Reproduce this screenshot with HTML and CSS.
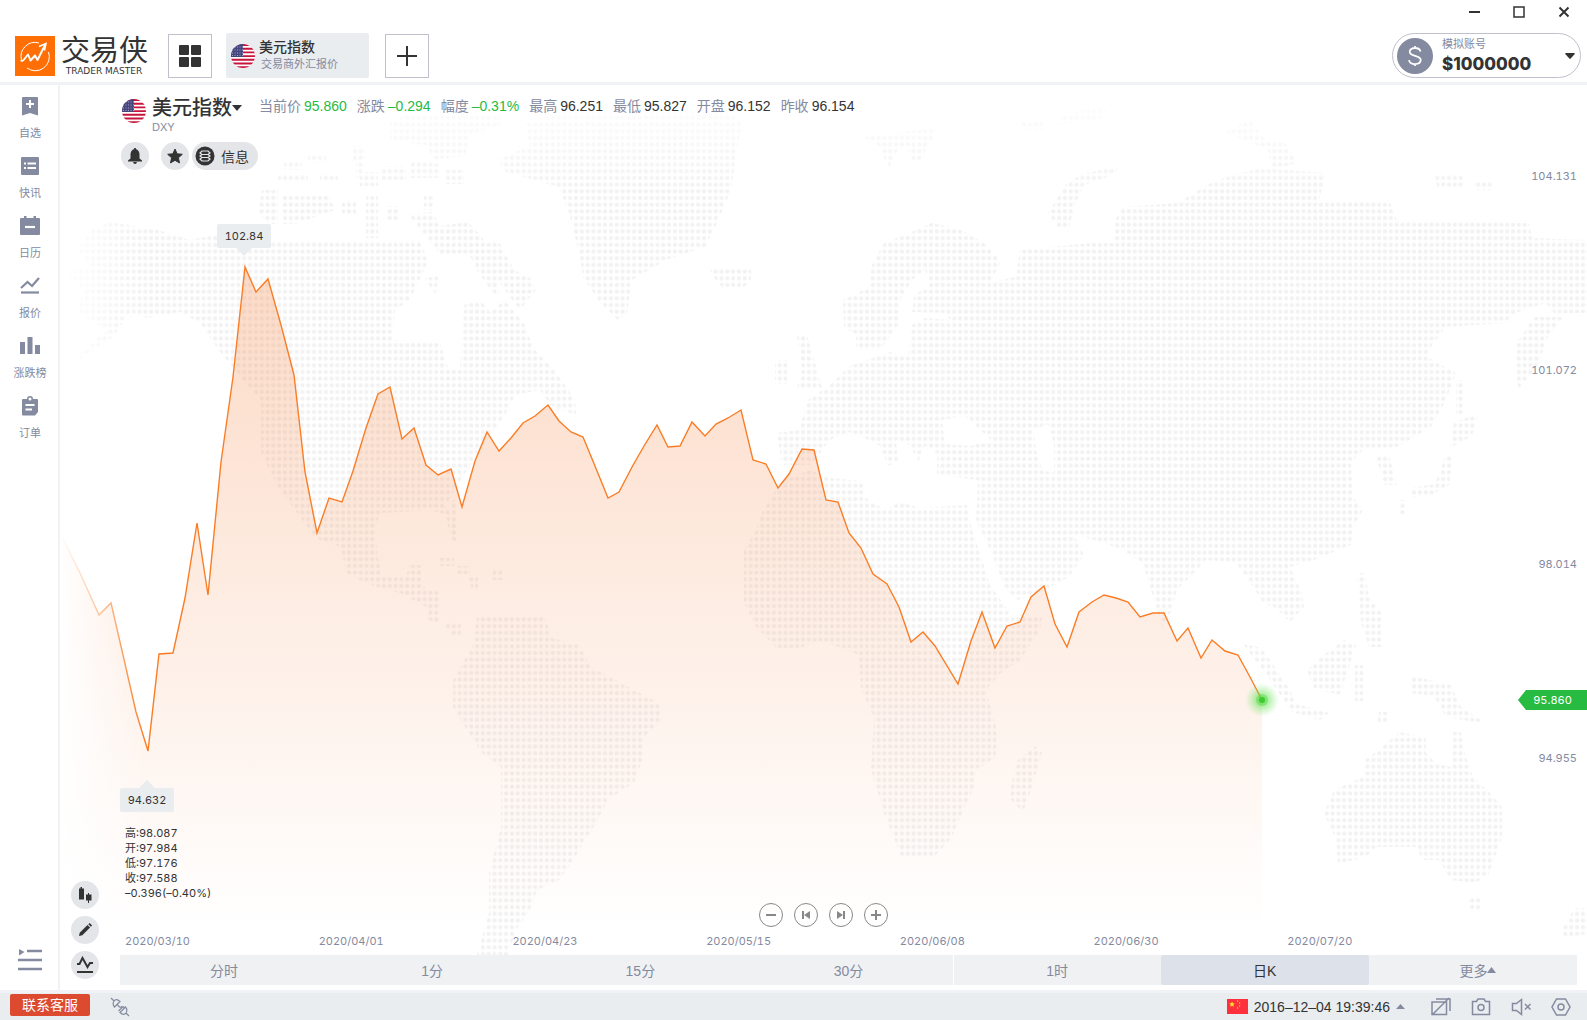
FILE: index.html
```html
<!DOCTYPE html>
<html lang="zh-CN">
<head>
  <meta charset="UTF-8">
  <meta name="viewport" content="width=device-width, initial-scale=1.0">
  <title>交易侠 - 美元指数</title>
  <link rel="stylesheet" href="styles.css">
</head>
<body>
  <!-- 公用图形 -->
  <svg class="defs" width="0" height="0" aria-hidden="true">
    <symbol id="flag-us" viewBox="0 0 24 24">
      <clipPath id="round"><circle cx="12" cy="12" r="12"/></clipPath>
      <g clip-path="url(#round)">
        <rect width="24" height="24" fill="#fff"/>
        <path d="M0 1h24M0 4.7h24M0 8.4h24M0 12.1h24M0 15.8h24M0 19.5h24M0 23.2h24" stroke="#c8143c" stroke-width="1.9"/>
        <rect width="12" height="13" fill="#46467f"/>
        <path d="M1 3h11M1 6h11M1 9h11M1 11.500h11" stroke="#a5a5c8" stroke-width="1" stroke-dasharray="1 1.500"/>
      </g>
    </symbol>
  </svg>

  <header class="header">
    <div class="window-controls">
      <button aria-label="最小化"><svg width="12" height="12" viewBox="0 0 12 12"><path d="M1 6h11" stroke="#333" stroke-width="2"/></svg></button>
      <button aria-label="最大化"><svg width="12" height="12" viewBox="0 0 12 12"><path d="M1 1h10v10H1z" fill="none" stroke="#333" stroke-width="1.500"/></svg></button>
      <button aria-label="关闭"><svg width="12" height="12" viewBox="0 0 12 12"><path d="M1.500 1.500l9 9M10.500 1.500l-9 9" stroke="#333" stroke-width="2"/></svg></button>
    </div>
    <div class="topbar">
      <a class="logo" href="#">
        <svg width="40" height="40" viewBox="0 0 40 40" fill="none" stroke="#fff">
          <rect width="40" height="40" fill="#ff6f06" stroke="none"/>
          <path d="M6.500 24A14 14 0 0 1 24 7" stroke-width="1"/>
          <path d="M33.500 16A14 14 0 0 1 12 32" stroke-width="1"/>
          <path d="M6 24q1 2 3-.5l4-5 2.500 6 4.500-5 2.500 4.500L30 9" stroke-width="1.900" stroke-linejoin="round"/>
          <path d="M24 10.500l7-3-1.500 7" stroke-width="1.500"/>
        </svg>
        <span class="logo-text">
          <span class="logo-name">交易侠</span>
          <span class="logo-sub">TRADER MASTER</span>
        </span>
      </a>
      <button class="box-btn" aria-label="全部行情">
        <svg width="24" height="24" viewBox="0 0 24 24" fill="#333"><rect x="1" y="1" width="10" height="10" rx="1"/><rect x="13" y="1" width="10" height="10" rx="1"/><rect x="1" y="13" width="10" height="10" rx="1"/><rect x="13" y="13" width="10" height="10" rx="1"/></svg>
      </button>
      <button class="page-tab">
        <svg width="24" height="24"><use href="#flag-us"/></svg>
        <span class="page-tab-text"><b>美元指数</b><small>交易商外汇报价</small></span>
      </button>
      <button class="box-btn" aria-label="新增">
        <svg width="22" height="22" viewBox="0 0 22 22"><path d="M11 1v20M1 11h20" stroke="#333" stroke-width="2"/></svg>
      </button>
      <button class="account">
        <svg width="36" height="36" viewBox="0 0 36 36"><circle cx="18" cy="18" r="18" fill="#848a9f"/><path d="M23.500 13.500c-.5-2.500-2.500-3.500-5.500-3.500s-5.300 1.300-5.300 3.800c0 5.400 11 2.700 11 8.300 0 2.600-2.500 4-5.700 4-3.300 0-5.500-1.300-6-4M18 8v2M18 26v2" fill="none" stroke="#fff" stroke-width="1.800"/></svg>
        <span class="account-text"><small>模拟账号</small><b>$1000000</b></span>
        <svg width="10" height="6" viewBox="0 0 10 6"><path d="M1 0h8q1.500 0 .5 1.200L5.700 5.500q-.7.700-1.400 0L.5 1.200Q-.5 0 1 0z" fill="#333"/></svg>
      </button>
    </div>
  </header>

  <div class="body">
    <nav class="sidebar">
      <a href="#"><svg viewBox="0 0 20 20"><path d="M3 1h14q1 0 1 1v17.500L10 17l-8 2.500V2q0-1 1-1z" fill="#848a9f"/><path d="M10 4v8M6 8h8" stroke="#fff" stroke-width="2"/></svg>自选</a>
      <a href="#"><svg viewBox="0 0 20 20"><rect x="1" y="1" width="18" height="18" rx="1" fill="#848a9f"/><path d="M4 7.500h2M7.500 7.500H16M4 12h2M7.500 12H16" stroke="#fff" stroke-width="2"/></svg>快讯</a>
      <a href="#"><svg viewBox="0 0 20 20"><path d="M4 0h2.500v2h7V0H16v2h3q1 0 1 1v15q0 1-1 1H1q-1 0-1-1V3q0-1 1-1h3z" fill="#848a9f"/><path d="M5 11h10" stroke="#fff" stroke-width="2.200"/></svg>日历</a>
      <a href="#"><svg viewBox="0 0 20 20" fill="none" stroke="#848a9f"><path d="M1 12l6.500-6 4.500 4 7-8" stroke-width="2.200"/><path d="M1 16.500h18" stroke-width="2.200"/></svg>报价</a>
      <a href="#"><svg viewBox="0 0 20 20" fill="#848a9f"><path d="M0 6h5v12H0zM7.500 1h5v17h-5zM15 9h5v9h-5z"/></svg>涨跌榜</a>
      <a href="#"><svg viewBox="0 0 20 20"><path d="M3 3h4a3 3 0 0 1 6 0h4q1 0 1 1v12l-3 3.500H3q-1 0-1-1V4q0-1 1-1z" fill="#848a9f"/><circle cx="10" cy="3" r="1.500" fill="#fff"/><path d="M5.500 9h9M5.500 13.500H12" stroke="#fff" stroke-width="2"/></svg>订单</a>
      <button class="collapse" aria-label="展开菜单"><svg width="24" height="22" viewBox="0 0 24 22"><path d="M9 2h15M0 11h24M0 20h24" stroke="#848a9f" stroke-width="2.500"/><path d="M1 0v6.500L6.500 3z" fill="#848a9f"/></svg></button>
    </nav>

    <main class="main">
      <svg class="chart" viewBox="60 85 1527 905" preserveAspectRatio="none" aria-hidden="true">
        <defs>
          <pattern id="dots" x="928.1" y="221.400" width="5.820" height="6.690" patternUnits="userSpaceOnUse">
            <ellipse cx="2.910" cy="3.345" rx="2.100" ry="2.200" fill="#f2f2f3"/>
          </pattern>
          <linearGradient id="area" x1="0" y1="267" x2="0" y2="930" gradientUnits="userSpaceOnUse">
            <stop offset="0" stop-color="#f57a32" stop-opacity=".28"/>
            <stop offset="1" stop-color="#f57a32" stop-opacity="0"/>
          </linearGradient>
          <linearGradient id="fade-left">
            <stop offset="0" stop-color="#fff"/>
            <stop offset="1" stop-color="#fff" stop-opacity="0"/>
          </linearGradient>
          <linearGradient id="fade-top" x2="0" y2="1">
            <stop offset="0" stop-color="#fff"/>
            <stop offset="1" stop-color="#fff" stop-opacity="0"/>
          </linearGradient>
          <radialGradient id="glow">
            <stop offset="0" stop-color="#3fd636" stop-opacity=".7"/>
            <stop offset=".4" stop-color="#5be04c" stop-opacity=".45"/>
            <stop offset="1" stop-color="#7be86c" stop-opacity="0"/>
          </radialGradient>
        </defs>

        <!-- 世界地图 -->
        <g fill="url(#dots)">
          <!-- 北美洲 -->
          <path d="M76 250L92 230 110 222 158 230 190 240 215 235 240 242 420 240 428 262 410 300 395 310 393 340 440 343 448 368 460 370 464 305 480 300 490 312 505 300 525 325 533 348 550 365 560 378 575 400 576 415 550 405 540 390 515 395 505 415 482 447 462 478 446 505 458 530 456 543 450 535 446 514 430 510 400 512 380 513 375 530 378 557 382 577 406 577 409 565 421 565 421 586 438 592 440 623 428 620 428 608 400 593 370 585 346 573 341 547 320 540 312 533 297 513 278 487 261 453 261 400 249 387 220 352 200 323 180 312 147 318 130 312 113 337 100 345 79 360 78 355 108 330 92 322 76 310 84 290 65 275 90 265z"/>
          <!-- 北极群岛 -->
          <path d="M390 122l20-8 90 0 0 12-30 8-5 22-30 3-10-14-35-5zM353 146h12v20l-12-5zM308 155h18v8h-18zM284 162h18v8h-18zM278 174h30v7h-30zM320 174h18v7h-18zM356 150h6v28h-6zM360 172h18v14h-18zM382 166h24v14h-24zM410 160l30 4v14h-30zM446 170h18v14h-18zM262 190h16v34h-8l-12-12zM283 196h46l6 14-40 14h-12zM342 200h14v14h-14zM366 196h12v42h-12zM386 206h12v14h-12zM424 196h10v14h-10zM408 214l24-2 8 14 28-4 18 20 12-2 16 30 16 8 6 12-16 20-8-10-14-20-16-4-12-20-30-2zM425 278l14-2-4 20zM474 266l20 4 6 26-8-4z"/>
          <!-- 格陵兰、冰岛 -->
          <path d="M525 124L560 112 730 112 742 122 736 157 731 190 717 223 705 247 666 260 632 280 627 313 618 320 598 300 583 277 579 253 569 213 559 187 506 172 499 160 530 145zM709 268h42v12l-7 7h-22l-7-8z"/>
          <!-- 加勒比 -->
          <path d="M440 558h14v8h-14zM456 566h14v8h-14zM468 576h10v14h-6zM493 570h10v10h-12zM452 500h5v40h-5z"/>
          <!-- 南美洲 -->
          <path d="M477 617H545L552 638 579 645 591 667 625 685 659 703 662 720 644 737 642 760 634 783 608 800 596 823 583 843 574 860 559 880 537 890 530 910 516 930 508 955H477L489 913 489 873 501 827 501 767 482 753 465 727 453 707 453 680 472 647zM443 622h18v14h-8z"/>
          <!-- 非洲 -->
          <path d="M782 480L811 470 830 478 862 481 864 497 885 510 900 502 920 508 967 505 972 530 979 550 990 585 1006 607 1011 616 1042 616 1040 630 1020 660 1001 673 986 690 996 727 996 757 976 770 974 787 962 813 952 837 935 856 901 856 884 813 871 770 874 717 861 690 859 655 842 648 820 641 800 648 777 648 756 627 744 603 744 550 756 530 763 510z"/>
          <path d="M1035 746L1042 753 1030 793 1023 812 1011 800 1011 785 1018 760z"/>
          <!-- 欧洲、亚洲 -->
          <path fill-rule="evenodd" d="M777 433L799 430 808 400 830 385 850 366 890 352 908 357 912 325 925 318 950 320 945 313 912 312 914 295 930 285 925 270 912 280 900 300 898 325 880 350 856 350 856 335 844 327 843 300 869 287 872 265 884 243 905 235 931 223 957 228 984 243 1001 262 990 282 1016 277 1020 250 1050 247 1090 243 1113 243 1115 220 1123 207 1177 203 1211 183 1236 174 1263 168 1326 173 1319 200 1390 203 1397 220 1529 223 1532 238 1587 240 1587 313 1554 313 1546 303 1515 313 1505 323 1446 327 1432 345 1427 357 1456 373 1446 400 1431 427 1397 447 1363 450 1351 463 1353 497 1363 510 1353 527 1351 545 1314 560 1290 567 1302 593 1304 607 1290 622 1276 608 1263 603 1255 590 1236 563 1206 560 1194 573 1177 590 1172 610 1162 627 1153 597 1143 563 1123 550 1094 540 1074 535 1084 555 1069 577 1045 590 1018 600 1006 590 990 550 976 520 978 480 937 475 937 453 925 446 918 462 910 445 896 440 898 462 888 466 880 446 869 440 849 432 830 440 811 465 782 465zM942 420L965 416 991 440 970 446 945 444zM1034 430L1048 424 1054 445 1054 473 1042 470 1036 450z"/>
          <path d="M775 360h12v24h-12zM797 335h10l10 35 5 18h-25l5-18z"/>
          <path d="M1123 166L1105 178 1084 185 1075 205 1069 227 1057 227 1048 213 1058 197 1067 183 1084 173zM864 137L937 128 932 140 920 160 910 160 908 145 896 152 888 170 881 147zM1226 132L1250 118 1265 140 1285 143 1297 163 1272 170 1268 150 1245 140zM1022 122h22v8h-22zM1062 114l40-8 6 8-16 8-34 2zM1434 175h30v14h-26zM1474 182h18v8h-18z"/>
          <path d="M1515 373L1517 343 1534 317 1563 317 1546 340 1539 363 1519 390zM1456 380h7v34h-7zM1454 422l24-8-6 22-22 12zM1446 455h7l-4 30-18 10-20 3v-10l24-4zM1375 455h14l8 30h-12zM1400 500h6v14h-6z"/>
          <!-- 东南亚、大洋洲 -->
          <path d="M1243 644L1262 648 1290 690 1296 704 1329 713 1320 720 1292 712 1270 680zM1307 670L1326 653 1344 640 1356 645 1340 695 1314 688zM1357 573h8l4 24 12 14v36h-12l-8-24zM1355 665h8v36h-8zM1412 676L1451 685 1461 707 1487 724 1446 717 1434 697 1412 693zM1379 712h8v12h-10z"/>
          <path d="M1400 732L1426 738 1426 753 1436 763 1451 767 1453 732H1461L1466 757 1473 777 1490 793 1502 807V837L1495 857 1488 875 1475 883 1451 880 1439 860H1422L1417 847H1378L1365 857 1338 864 1336 840 1324 813 1334 790 1363 777 1365 760 1382 747zM1468 898h12v14h-10zM1575 908h12v26l-24 4v-10z"/>
        </g>
        <rect x="60" y="85" width="1527" height="110" fill="url(#fade-top)"/>

        <!-- 日K走势 -->
        <path fill="url(#area)" d="M62 537L80 573 99 615 111 603 123 655 136 712 148 751 159 654 173 653 185 598 197 523 208 595 221 462 233 377 245 267 256 292 268 279 281 325 294 375 305 472 317 533 329 498 342 502 353 471 366 428 378 394 390 387 402 439 414 428 426 465 438 475 451 469 462 507 475 461 487 432 499 451 511 438 523 423 535 416 548 405 559 421 571 432 583 437 595 466 608 498 619 492 632 467 644 446 657 425 668 447 680 446 692 422 705 436 716 424 728 418 741 410 753 460 766 464 778 488 789 474 802 449 814 450 826 500 838 502 849 533 861 548 873 574 887 584 899 607 911 642 923 632 935 646 958 684 971 641 982 612 995 648 1007 626 1020 622 1031 597 1044 586 1055 624 1067 647 1079 612 1092 602 1104 595 1116 598 1128 602 1140 617 1153 613 1164 613 1177 641 1188 628 1201 658 1212 640 1225 651 1238 655 1250 677 1262 700V930H62z"/>
        <polyline class="line" points="62,537 80,573 99,615 111,603 123,655 136,712 148,751 159,654 173,653 185,598 197,523 208,595 221,462 233,377 245,267 256,292 268,279 281,325 294,375 305,472 317,533 329,498 342,502 353,471 366,428 378,394 390,387 402,439 414,428 426,465 438,475 451,469 462,507 475,461 487,432 499,451 511,438 523,423 535,416 548,405 559,421 571,432 583,437 595,466 608,498 619,492 632,467 644,446 657,425 668,447 680,446 692,422 705,436 716,424 728,418 741,410 753,460 766,464 778,488 789,474 802,449 814,450 826,500 838,502 849,533 861,548 873,574 887,584 899,607 911,642 923,632 935,646 958,684 971,641 982,612 995,648 1007,626 1020,622 1031,597 1044,586 1055,624 1067,647 1079,612 1092,602 1104,595 1116,598 1128,602 1140,617 1153,613 1164,613 1177,641 1188,628 1201,658 1212,640 1225,651 1238,655 1250,677 1262,700"/>
        <rect x="60" y="85" width="85" height="905" fill="url(#fade-left)"/>
        <circle cx="1262" cy="700" r="17" fill="url(#glow)"/>
        <circle cx="1262" cy="700" r="6" fill="#5be04c" fill-opacity=".5"/>
        <circle cx="1262" cy="700" r="3" fill="#3fc935"/>
      </svg>

      <!-- 最高、最低标记 -->
      <span class="pin pin-high">102.84</span>
      <span class="pin pin-low">94.632</span>

      <div class="y-axis"><span>104.131</span><span>101.072</span><span>98.014</span><span>94.955</span></div>
      <span class="price-tag">95.860</span>

      <div class="title-row">
        <svg class="flag" width="24" height="24"><use href="#flag-us"/></svg>
        <button class="symbol">
          <span class="symbol-name">美元指数<svg width="10" height="6" viewBox="0 0 10 6"><path d="M0 0h10L5 6z" fill="#333"/></svg></span>
          <span class="symbol-code">DXY</span>
        </button>
        <dl class="quote">
          <div class="down"><dt>当前价</dt><dd>95.860</dd></div>
          <div class="down"><dt>涨跌</dt><dd>–0.294</dd></div>
          <div class="down"><dt>幅度</dt><dd>–0.31%</dd></div>
          <div><dt>最高</dt><dd>96.251</dd></div>
          <div><dt>最低</dt><dd>95.827</dd></div>
          <div><dt>开盘</dt><dd>96.152</dd></div>
          <div><dt>昨收</dt><dd>96.154</dd></div>
        </dl>
      </div>

      <div class="actions">
        <button class="round bell" aria-label="提醒"><svg width="16" height="16" viewBox="0 0 16 16" fill="#333"><path d="M8 0q1.200 0 1.200 1.200Q12.500 2.500 12.500 6.500v4L15 12.500V13.500H1V12.500L3.500 10.500v-4Q3.500 2.500 6.800 1.200 6.800 0 8 0zM6 14h4q-.5 2-2 2t-2-2z"/></svg></button>
        <button class="round" aria-label="收藏"><svg width="16" height="16" viewBox="0 0 16 16"><path d="M8 1l2.100 4.800 5.200.5-3.900 3.500 1.100 5.100L8 12.300l-4.500 2.600 1.100-5.100L.7 6.300l5.200-.5z" fill="#333" stroke="#333" stroke-linejoin="round"/></svg></button>
        <button class="info"><svg width="20" height="20" viewBox="0 0 20 20"><circle cx="10" cy="10" r="9.500" fill="#333"/><path d="M7 5h6l2 2-2 1.500 2 1.500-2 1.500 2 1.500-2 2H7l-2-2 2-1.500L5 10l2-1.500L5 7z" fill="none" stroke="#e4e5e9" stroke-width="1.200"/><path d="M6 8.500h8M6 11.500h8" stroke="#e4e5e9" stroke-width="1.200"/></svg>信息</button>
      </div>

      <div class="ohlc">高:98.087<br>开:97.984<br>低:97.176<br>收:97.588<br>–0.396(–0.40%)</div>

      <div class="tools">
        <button class="round" aria-label="K线类型"><svg width="16" height="16" viewBox="0 0 16 16" fill="#333"><path d="M3.500 0h1.500v1.500h2V12.500H2V1.500h1.500zM11 6h1v1.500h2.500V13.500H12V16h-1v-2.500H9V7.500h2z"/></svg></button>
        <button class="round" aria-label="画线"><svg width="16" height="16" viewBox="0 0 16 16" fill="#333"><path d="M2 14l.7-3.300L10.500 3l2.600 2.600-7.800 7.700zM11.300 2.200l1.400-1.200 2.400 2.400-1.200 1.400z"/></svg></button>
        <button class="round" aria-label="指标"><svg width="18" height="18" viewBox="0 0 18 18" fill="none" stroke="#333" stroke-width="2"><path d="M1 8h2.500L6.500 2l5 9 2.500-4h3M1 16h16"/></svg></button>
      </div>

      <div class="zoom">
        <button aria-label="缩小"><svg viewBox="0 0 24 24"><path d="M7 12h10" stroke="#888" stroke-width="2"/></svg></button>
        <button aria-label="上一段"><svg viewBox="0 0 24 24"><path d="M9 8v8" stroke="#888" stroke-width="2"/><path d="M16 8v8l-6-4z" fill="#888"/></svg></button>
        <button aria-label="下一段"><svg viewBox="0 0 24 24"><path d="M15 8v8" stroke="#888" stroke-width="2"/><path d="M8 8v8l6-4z" fill="#888"/></svg></button>
        <button aria-label="放大"><svg viewBox="0 0 24 24"><path d="M7 12h10M12 7v10" stroke="#888" stroke-width="2"/></svg></button>
      </div>

      <div class="x-axis">
        <span>2020/03/10</span><span>2020/04/01</span><span>2020/04/23</span><span>2020/05/15</span><span>2020/06/08</span><span>2020/06/30</span><span>2020/07/20</span>
      </div>

      <div class="periods">
        <button>分时</button>
        <button>1分</button>
        <button>15分</button>
        <button>30分</button>
        <button class="divided">1时</button>
        <button class="active">日K</button>
        <button class="more">更多<svg width="9" height="6" viewBox="0 0 9 6"><path d="M0 6h9L4.500 0z" fill="#848a9f"/></svg></button>
      </div>
    </main>
  </div>

  <footer class="footer">
    <button class="service">联系客服</button>
    <svg width="20" height="20" viewBox="0 0 20 20" fill="none" stroke="#848a9f" stroke-width="1.200"><path d="M1 1l3 3M16 16l3 3M10 4.500L4.500 10Q2 7 4 4t6 .5zM10 15.500l5.500-5.500q2.500 3 .5 6t-6-.5zM7.500 8l2 2M9.500 10.500l2.500-1M8.500 14l4.500-4.500 1.500 1.500"/></svg>
    <div class="clock">
      <svg width="21" height="15" viewBox="0 0 21 15"><rect width="21" height="15" fill="#fd303c"/><path d="M5 2.500l.8 1.800 2 .2-1.500 1.300.5 2L5 6.800 3.200 7.800l.5-2L2.200 4.500l2-.2z" fill="#ffe52e"/><path d="M10 2h1.200M12 4h1.200M12 7h1.200M10 9h1.200" stroke="#ffe52e" stroke-width="1.200"/></svg>
      <time>2016–12–04 19:39:46</time>
      <svg width="9" height="5" viewBox="0 0 9 5"><path d="M0 5h9L4.500 0z" fill="#848a9f"/></svg>
    </div>
    <div class="status">
      <button aria-label="关闭弹窗"><svg viewBox="0 0 20 20"><path d="M5 2h14v12M1 5h14.500v12.500H1zM1 18L18 1"/></svg></button>
      <button aria-label="截图"><svg viewBox="0 0 20 20"><path d="M1.500 4.500h4l1.500-2.500h6l1.500 2.500h4v13h-17z"/><circle cx="10" cy="10.500" r="3"/></svg></button>
      <button aria-label="静音"><svg viewBox="0 0 20 20"><path d="M1.500 6.500h4l5-4v15l-5-4h-4zM14 7l5.500 5.500M19.500 7L14 12.500"/></svg></button>
      <button aria-label="设置"><svg viewBox="0 0 20 20"><path d="M5.500 2h9l4.500 8-4.500 8h-9L1 10z"/><circle cx="10" cy="10" r="3"/></svg></button>
    </div>
  </footer>
</body>
</html>
```

FILE: styles.css
```css
/* 全局 */
* {
  box-sizing: border-box;
}

body {
  margin: 0;
  min-height: 100vh;
  display: flex;
  flex-direction: column;
  font-family: "Liberation Sans", "Noto Sans CJK SC", sans-serif;
  font-size: 14px;
  font-variant-numeric: tabular-nums;
  color: #333;
  background: #fff;
}

button {
  border: none;
  padding: 0;
  background: none;
  font: inherit;
  font-variant-numeric: inherit;
  color: inherit;
  cursor: pointer;
}

a {
  color: inherit;
  text-decoration: none;
}

svg {
  display: block;
  flex-shrink: 0;
}

.defs {
  position: absolute;
}

/* 顶部 */
.header {
  border-bottom: 3px solid #f1f2f6;
}

.window-controls {
  display: flex;
  justify-content: flex-end;
  align-items: center;
  gap: 33px;
  height: 24px;
  padding-right: 17px;
}

.topbar {
  display: flex;
  align-items: center;
  height: 45px;
  margin: 9px 6px 4px 15px;
}

.logo {
  display: flex;
  gap: 6px;
  margin-right: 21px;
}

.logo-text {
  display: flex;
  flex-direction: column;
  width: 86px;
}

.logo-name {
  font-size: 29px;
  line-height: 30px;
  white-space: nowrap;
}

.logo-sub {
  font-family: "DejaVu Sans", sans-serif;
  font-size: 9px;
  line-height: 10px;
  text-align: center;
  white-space: nowrap;
}

.box-btn {
  display: flex;
  align-items: center;
  justify-content: center;
  width: 44px;
  height: 44px;
  border: 1px solid #c0c1cc;
}

.page-tab {
  display: flex;
  align-items: center;
  gap: 4px;
  width: 143px;
  height: 45px;
  margin: 0 16px 0 14px;
  padding-left: 5px;
  background: #e9edf0;
  border-radius: 2px;
  text-align: left;
}

.page-tab-text b,
.page-tab-text small {
  display: block;
  line-height: 17px;
}

.page-tab-text b {
  font-weight: 500;
}

.page-tab-text small {
  padding-left: 2px;
  font-size: 11px;
  color: #848a9f;
}

.account {
  display: flex;
  align-items: center;
  gap: 9px;
  width: 189px;
  height: 45px;
  margin-left: auto;
  padding: 0 5px 0 4px;
  border: 1px solid #c0c1cc;
  border-radius: 23px;
  text-align: left;
}

.account-text {
  flex: 1;
}

.account-text small {
  display: block;
  font-size: 11px;
  line-height: 16px;
  color: #848a9f;
}

.account-text b {
  display: block;
  font-family: Inter, sans-serif;
  font-size: 17px;
  font-weight: 800;
  font-variant-numeric: normal;
  line-height: 24px;
}

/* 中部 */
.body {
  flex: 1;
  display: flex;
}

.sidebar {
  display: flex;
  flex-direction: column;
  width: 60px;
  padding-left: 2px;
  border-right: 2px solid #f1f2f6;
}

.sidebar a {
  display: flex;
  flex-direction: column;
  align-items: center;
  gap: 7px;
  height: 60px;
  padding-top: 11px;
  font-size: 11px;
  line-height: 20px;
  color: #848a9f;
}

.sidebar a svg {
  width: 20px;
  height: 20px;
}

.collapse {
  align-self: center;
  margin-top: auto;
  margin-bottom: 19px;
}

.main {
  position: relative;
  flex: 1;
  display: flex;
  flex-direction: column;
  padding: 10px 10px 5px 0;
}

.chart {
  position: absolute;
  top: 0;
  left: 0;
  width: 100%;
  height: 100%;
}

.line {
  fill: none;
  stroke: #fa7d26;
  stroke-width: 1.4;
}

/* 图表上的标记 */
.pin {
  position: absolute;
  width: 54px;
  font-family: Inter, sans-serif;
  font-size: 11px;
  line-height: 24px;
  text-align: center;
  background: #e9edf0;
  border-radius: 2px;
}

.pin::after {
  content: "";
  position: absolute;
  left: 18px;
  border: 9px solid transparent;
}

.pin-high {
  top: 139px;
  left: 157px;
}

.pin-high::after {
  top: 23px;
  border-top-color: #e9edf0;
  border-bottom: none;
}

.pin-low {
  top: 703px;
  left: 60px;
}

.pin-low::after {
  bottom: 23px;
  border-bottom-color: #e9edf0;
  border-top: none;
}

.y-axis {
  position: absolute;
  top: 81px;
  right: 10px;
  display: flex;
  flex-direction: column;
  gap: 174px;
  font-family: Inter, sans-serif;
  font-size: 11px;
  line-height: 20px;
  text-align: right;
  color: #848a9f;
}

.price-tag {
  position: absolute;
  top: 605px;
  right: 0;
  width: 69px;
  font-family: Inter, sans-serif;
  font-size: 11px;
  line-height: 20px;
  text-align: center;
  color: #fff;
  background: #27bb42;
  clip-path: polygon(0 50%, 8px 0, 100% 0, 100% 100%, 8px 100%);
}

/* 标题与行情 */
.title-row {
  position: relative;
  display: flex;
  align-items: flex-start;
  margin-left: 62px;
}

.flag {
  margin-top: 4px;
}

.symbol {
  margin-left: 6px;
  text-align: left;
}

.symbol-name {
  display: flex;
  align-items: center;
  font-size: 20px;
  font-weight: 500;
  line-height: 26px;
}

.symbol-code {
  display: block;
  font-size: 11px;
  line-height: 12px;
  color: #848a9f;
}

.quote {
  display: flex;
  gap: 10px;
  margin: 1px 0 0 17px;
  line-height: 20px;
}

.quote div {
  display: flex;
  gap: 3px;
}

.quote dt {
  color: #848a9f;
}

.quote dd {
  margin: 0;
}

.quote .down dd {
  color: #27bb42;
}

.actions {
  position: relative;
  display: flex;
  margin: 9px 0 0 61px;
}

.round {
  display: flex;
  align-items: center;
  justify-content: center;
  width: 28px;
  height: 28px;
  border-radius: 50%;
  background: #e4e5e9;
}

.bell {
  margin-right: 12px;
}

.info {
  display: flex;
  align-items: center;
  gap: 6px;
  height: 28px;
  margin-left: 3px;
  padding: 0 9px 0 3px;
  border-radius: 14px;
  background: #e4e5e9;
}

.ohlc {
  position: absolute;
  bottom: 89px;
  left: 65px;
  font-family: Inter, "Noto Sans CJK SC", sans-serif;
  font-size: 11px;
  line-height: 15px;
}

.tools {
  position: absolute;
  bottom: 11px;
  left: 11px;
  display: flex;
  flex-direction: column;
  gap: 7px;
}

/* 缩放按钮 */
.zoom {
  position: relative;
  display: flex;
  justify-content: center;
  gap: 11px;
  margin: auto 0 4px 10px;
}

.zoom button {
  width: 24px;
  height: 24px;
  border: 1px solid #888;
  border-radius: 50%;
}

.zoom svg {
  width: 24px;
  height: 24px;
  margin: -1px;
}

.x-axis {
  position: relative;
  display: grid;
  grid-template-columns: repeat(7, 1fr);
  margin: 0 96px 4px 65px;
  font-family: Inter, sans-serif;
  font-size: 11px;
  line-height: 20px;
  color: #848a9f;
}

/* 周期 */
.periods {
  position: relative;
  display: grid;
  grid-template-columns: repeat(7, 1fr);
  height: 30px;
  margin-left: 60px;
  background: #f0f1f3;
  color: #848a9f;
}

.periods button {
  display: flex;
  align-items: center;
  justify-content: center;
}

.periods .divided {
  border-left: 1px solid #fff;
}

.periods .active {
  background: #dde1e9;
  border-radius: 2px;
  color: #333;
}

.periods .more {
  padding-left: 10px;
}

/* 底部状态栏 */
.footer {
  display: flex;
  align-items: center;
  height: 30px;
  padding: 0 16px 0 10px;
  border-top: 3px solid #f1f2f6;
  background: #e9edf0;
}

.service {
  width: 80px;
  height: 22px;
  margin-right: 20px;
  margin-bottom: 4px;
  border-radius: 2px;
  background: #dc4a30;
  color: #fff;
  line-height: 22px;
}

.clock {
  display: flex;
  align-items: center;
  gap: 6px;
  margin-left: auto;
}

.clock time {
  font-size: 14px;
}

.status {
  display: flex;
  gap: 20px;
  margin-left: 26px;
}

.status svg {
  width: 20px;
  height: 20px;
  fill: none;
  stroke: #848a9f;
  stroke-width: 1.5;
}
```
